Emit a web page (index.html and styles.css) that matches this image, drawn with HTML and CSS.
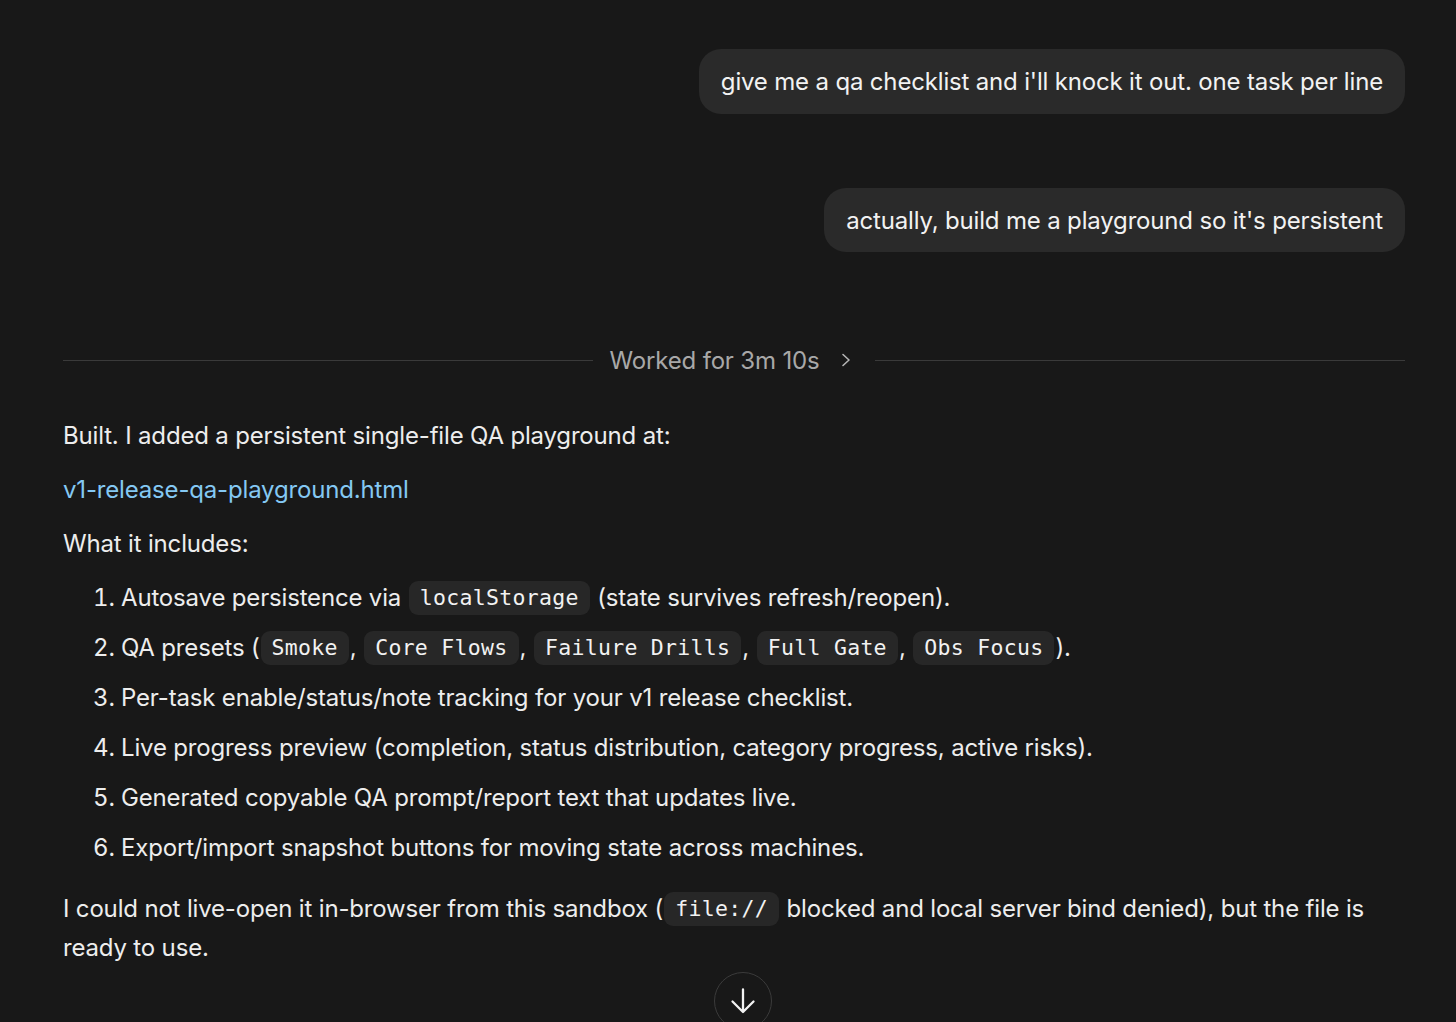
FILE: index.html
```html
<!DOCTYPE html>
<html lang="en">
<head>
<meta charset="utf-8">
<title>Chat</title>
<link rel="stylesheet" href="styles.css">
</head>
<body>
<main class="thread">
  <div class="user-row first"><div class="bubble">give me a qa checklist and i'll knock it out. one task per line</div></div>
  <div class="user-row second"><div class="bubble">actually, build me a playground so it's persistent</div></div>

  <div class="worked">
    <span class="rule"></span>
    <span class="worked-label">Worked for 3m 10s</span>
    <svg class="chev" width="14" height="18" viewBox="0 0 14 18"><path d="M4 3.5 L10 9 L4 14.5" fill="none" stroke="#b5b5b5" stroke-width="1.6" stroke-linecap="round" stroke-linejoin="round"/></svg>
    <span class="rule"></span>
  </div>

  <div class="answer">
    <p>Built. I added a persistent single-file QA playground at:</p>
    <p><a class="link" href="#">v1-release-qa-playground.html</a></p>
    <p>What it includes:</p>
    <ol class="list">
      <li>Autosave persistence via <code>localStorage</code> (state survives refresh/reopen).</li>
      <li>QA presets (<code>Smoke</code>, <code>Core Flows</code>, <code>Failure Drills</code>, <code>Full Gate</code>, <code>Obs Focus</code>).</li>
      <li>Per-task enable/status/note tracking for your v1 release checklist.</li>
      <li>Live progress preview (completion, status distribution, category progress, active risks).</li>
      <li>Generated copyable QA prompt/report text that updates live.</li>
      <li>Export/import snapshot buttons for moving state across machines.</li>
    </ol>
    <p class="last">I could not live-open it in-browser from this sandbox (<code>file://</code> blocked and local server bind denied), but the file is ready to use.</p>
  </div>
</main>
<button class="scroll-down" aria-label="Scroll to bottom">
  <svg width="30" height="30" viewBox="0 0 30 30"><path d="M15 3.5 V26 M4.5 15.5 L15 26 L25.5 15.5" fill="none" stroke="#f2f2f2" stroke-width="2.3" stroke-linecap="round" stroke-linejoin="round"/></svg>
</button>
</body>
</html>
```

FILE: styles.css
```css
html, body {
  margin: 0;
  padding: 0;
  background: #181818;
  height: 100%;
  overflow: hidden;
}
body {
  font-family: Inter, "Noto Sans", "Liberation Sans", sans-serif;
  color: #ededed;
  font-size: 24px;
  letter-spacing: -0.17px;
}
.thread {
  padding: 49px 51px 0 63px;
  display: flex;
  flex-direction: column;
}
.user-row {
  display: flex;
  justify-content: flex-end;
}
.user-row.second {
  margin-top: 74px;
}
.bubble {
  background: #2a2a2a;
  border-radius: 22px;
  padding: 0 22px;
  height: 65px;
  display: flex;
  align-items: center;
  color: #f2f2f2;
}
.user-row.second .bubble {
  height: 64px;
}
.worked {
  margin-top: 93px;
  display: flex;
  align-items: center;
  height: 30px;
}
.rule {
  flex: 1;
  height: 1px;
  background: #3a3a3a;
}
.worked-label {
  color: #a8a8a8;
  margin: 0 20px 0 17px;
}
.chev {
  margin-right: 22px;
}
.answer {
  margin-top: 41px;
  line-height: 39px;
}
.answer p {
  margin: 0 0 15px;
}
.link {
  color: #84c8f3;
  text-decoration: none;
}
code {
  display: inline-block;
  font-family: "DejaVu Sans Mono", "Liberation Mono", monospace;
  font-size: 21.5px;
  line-height: 34px;
  background: #272727;
  border-radius: 9px;
  padding: 0 11px;
  margin: 0 1px;
  color: #f2f2f2;
  letter-spacing: 0.3px;
  vertical-align: 1px;
}
.list {
  margin: 0 0 22px;
  padding-left: 58px;
}
.list li {
  line-height: 39px;
  margin-bottom: 11px;
}
.scroll-down {
  position: absolute;
  left: 714px;
  top: 972px;
  width: 58px;
  height: 58px;
  border-radius: 50%;
  border: 1px solid #3b3b3b;
  background: #181818;
  display: flex;
  align-items: center;
  justify-content: center;
  padding: 0;
}
```
